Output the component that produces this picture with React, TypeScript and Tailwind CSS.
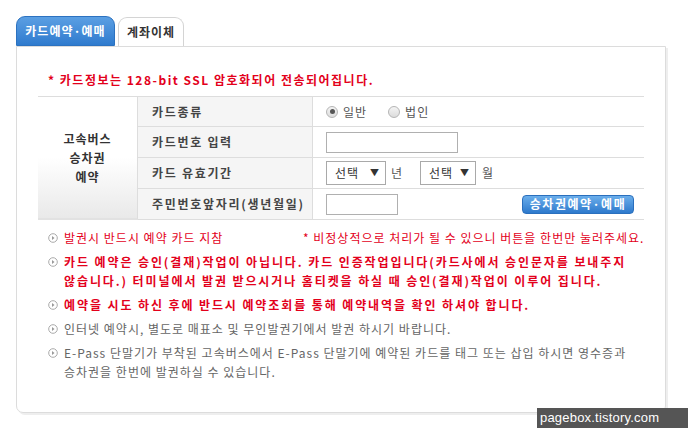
import React from "react";

const RED = "text-[#e3001b]";

const Bullet: React.FC = () => (
  <svg width="10" height="10" viewBox="0 0 10 10" className="shrink-0 mt-[5px]">
    <circle cx="5" cy="5" r="4.3" fill="white" stroke="#aaa" strokeWidth="1" />
    <path d="M4 3 L6.5 5 L4 7 Z" fill="#999" />
  </svg>
);

const Note: React.FC<{ className: string; children: React.ReactNode }> = ({ className, children }) => (
  <div className="flex items-start gap-[6px] mt-[5px]">
    <Bullet />
    <div className={`leading-[19px] whitespace-nowrap ${className}`}>{children}</div>
  </div>
);

const Radio: React.FC<{ checked?: boolean; label: string }> = ({ checked, label }) => (
  <div className="flex items-center gap-[5px]">
    <span className="w-[12px] h-[12px] rounded-full border border-[#b5b5b5] bg-gradient-to-b from-[#f4f4f4] to-[#dcdcdc] flex items-center justify-center">
      {checked && <span className="w-[5px] h-[5px] rounded-full bg-[#555]" />}
    </span>
    <span className="text-[#555]">{label}</span>
  </div>
);

const Select: React.FC<{ w: string }> = ({ w }) => (
  <div className={`${w} h-[24px] border border-[#a9a9a9] bg-white flex items-center justify-between pl-[8px] pr-[5px] text-[#333]`}>
    <span>선택</span>
    <span className="text-[9px]">▼</span>
  </div>
);

const Row: React.FC<{ label: string; h: string; children: React.ReactNode }> = ({ label, h, children }) => (
  <div className={`flex ${h} border-b border-[#ddd]`}>
    <div className="w-[175px] shrink-0 bg-[#f5f5f5] border-r border-[#ddd] flex items-center pl-[14px] font-bold text-[#444] tracking-[1.7px] whitespace-nowrap">
      {label}
    </div>
    <div className="flex-1 flex items-center pl-[13px] pr-[10px]">{children}</div>
  </div>
);

export default function App() {
  return (
    <div
      className="w-[697px] h-[436px] bg-white relative text-[12px] overflow-hidden tracking-[1px]"
      style={{ fontFamily: '"Noto Sans CJK KR", "Noto Sans", sans-serif' }}
    >
      <div className="pt-[16px] pl-[16px]">
        <div className="flex items-end gap-[3px] h-[30px]">
          <div className="w-[99px] h-[30px] rounded-t-[9px] bg-gradient-to-b from-[#5b9fe3] to-[#2f7bce] border border-[#2c72c0] flex items-center justify-center text-white font-bold">
            카드예약·예매
          </div>
          <div className="w-[66px] h-[29px] rounded-t-[9px] bg-white border border-b-0 border-[#d4d4d4] flex items-center justify-center text-[#333] font-bold">
            계좌이체
          </div>
        </div>
        <div className="w-[650px] h-[367px] border border-[#dcdcdc] rounded-b-[7px] shadow-[2px_2px_0_#eeeeee] px-[21px]">
          <div className={`mt-[23px] pl-[10px] font-bold leading-[19px] tracking-[1.5px] ${RED}`}>
            * 카드정보는 128-bit SSL 암호화되어 전송되어집니다.
          </div>
          <div className="mt-[7px] w-[606px] border-t border-[#ddd] flex">
            <div className="w-[100px] shrink-0 bg-gradient-to-b from-white via-white to-[#e9e9e9] border-r border-[#ddd] border-b-2 border-b-[#e2e2e2] flex flex-col items-center justify-center font-bold text-[#333] leading-[19px]">
              <span>고속버스</span>
              <span>승차권</span>
              <span>예약</span>
            </div>
            <div className="flex-1 flex flex-col">
              <Row label="카드종류" h="h-[30px]">
                <div className="flex items-center gap-[21px]">
                  <Radio checked label="일반" />
                  <Radio label="법인" />
                </div>
              </Row>
              <Row label="카드번호 입력" h="h-[31px]">
                <div className="w-[132px] h-[21px] border border-[#b0b0b0] bg-white" />
              </Row>
              <Row label="카드 유효기간" h="h-[31px]">
                <div className="flex items-center">
                  <Select w="w-[60px]" />
                  <span className="ml-[5px] text-[#555]">년</span>
                  <div className="ml-[17px]">
                    <Select w="w-[56px]" />
                  </div>
                  <span className="ml-[6px] text-[#555]">월</span>
                </div>
              </Row>
              <Row label="주민번호앞자리(생년월일)" h="h-[31px]">
                <div className="flex items-center justify-between w-full">
                  <div className="w-[72px] h-[21px] border border-[#b0b0b0] bg-white" />
                  <div className="w-[112px] h-[19px] rounded-[4px] border border-[#2a6fbd] bg-gradient-to-b from-[#6aaeeb] to-[#2d79cc] flex items-center justify-center text-white font-bold leading-none tracking-[1.5px]">
                    승차권예약·예매
                  </div>
                </div>
              </Row>
            </div>
          </div>
          <div className="mt-[8px] pl-[10px]">
            <Note className={RED}>
              <span className="inline-block w-[239px]">발권시 반드시 예약 카드 지참</span>
              <span>* 비정상적으로 처리가 될 수 있으니 버튼을 한번만 눌러주세요.</span>
            </Note>
            <Note className={`${RED} font-bold tracking-[1.9px]`}>
              카드 예약은 승인(결재)작업이 아닙니다. 카드 인증작업입니다(카드사에서 승인문자를 보내주지
              <br />
              않습니다.) 터미널에서 발권 받으시거나 홈티켓을 하실 때 승인(결재)작업이 이루어 집니다.
            </Note>
            <Note className={`${RED} font-bold tracking-[1.9px]`}>
              예약을 시도 하신 후에 반드시 예약조회를 통해 예약내역을 확인 하셔야 합니다.
            </Note>
            <Note className="text-[#666] tracking-[1px]">인터넷 예약시, 별도로 매표소 및 무인발권기에서 발권 하시기 바랍니다.</Note>
            <Note className="text-[#666] tracking-[1px]">
              E-Pass 단말기가 부착된 고속버스에서 E-Pass 단말기에 예약된 카드를 태그 또는 삽입 하시면 영수증과
              <br />
              승차권을 한번에 발권하실 수 있습니다.
            </Note>
          </div>
        </div>
      </div>
      <div
        className="absolute left-[537px] top-[408px] w-[151px] h-[20px] bg-[#555] text-white text-[13px] leading-[20px] pl-[3px] tracking-[0.2px]"
        style={{ fontFamily: '"Liberation Sans", Arial, sans-serif' }}
      >
        pagebox.tistory.com
      </div>
    </div>
  );
}
